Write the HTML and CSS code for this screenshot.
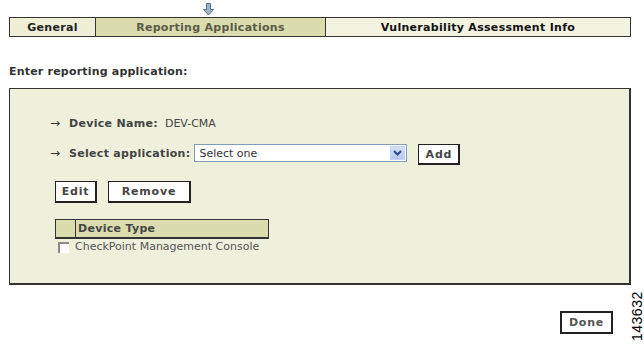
FILE: index.html
```html
<!DOCTYPE html>
<html lang="en">

<head>
  <meta charset="UTF-8">
  <title>Reporting Applications</title>
  <link rel="stylesheet" href="styles.css">
</head>

<body>
  <div class="page">
    <div class="marker">
      <svg width="11" height="13" viewBox="0 0 11 13">
        <path d="M3.5 0.5 H7.5 V6.5 H10.5 L5.5 12 L0.5 6.5 H3.5 Z" fill="#9fb3c8" stroke="#5d7089" stroke-width="1"/>
      </svg>
    </div>
    <div class="tabs">
      <div class="tab tab-general">General</div>
      <div class="tab tab-active">Reporting Applications</div>
      <div class="tab tab-vuln">Vulnerability Assessment Info</div>
    </div>

    <h2 class="prompt">Enter reporting application:</h2>

    <div class="panel">
      <div class="field-row">
        <span class="arrow">&rarr;</span>
        <span class="label">Device Name:</span>
        <span class="value">DEV-CMA</span>
      </div>
      <div class="field-row select-row">
        <span class="arrow">&rarr;</span>
        <span class="label">Select application:</span>
        <div class="select-box">
          <span>Select one</span>
          <span class="select-btn">
            <svg width="9" height="6" viewBox="0 0 9 6"><path d="M1 1 L4.5 4.5 L8 1" fill="none" stroke="#2c4a8a" stroke-width="2"/></svg>
          </span>
        </div>
        <button type="button" class="btn btn-add">Add</button>
      </div>
      <div class="actions">
        <button type="button" class="btn btn-edit">Edit</button>
        <button type="button" class="btn btn-remove">Remove</button>
      </div>
      <div class="device-table">
        <div class="table-head">
          <div class="head-check"></div>
          <div class="head-title">Device Type</div>
        </div>
        <div class="table-row">
          <span class="checkbox"></span>
          <span>CheckPoint Management Console</span>
        </div>
      </div>
    </div>

    <div class="footer">
      <button type="button" class="btn btn-done">Done</button>
    </div>
  </div>
  <div class="figure-id">143632</div>
</body>

</html>
```

FILE: styles.css
```css
body {
  margin: 0;
  padding: 0;
  font-family: "DejaVu Sans", Verdana, sans-serif;
  font-size: 11px;
  color: #444;
  background: white;
  position: relative;
  width: 644px;
  height: 347px;
  overflow: hidden;
}

.page {
  margin-left: 9px;
  width: 622px;
}

.marker {
  height: 17px;
  padding-left: 194px;
  padding-top: 3px;
  box-sizing: border-box;
}

.marker svg {
  display: block;
}

.tabs {
  display: flex;
  height: 20px;
  border: 1px solid #333;
  box-sizing: border-box;
}

.tab {
  display: flex;
  align-items: center;
  justify-content: center;
  font-weight: bold;
  font-size: 11px;
  letter-spacing: 0.3px;
}

.tab-general {
  width: 85px;
  background: #eeefd6;
  color: #222;
  border-right: 1px solid #333;
}

.tab-active {
  width: 229px;
  background: #dadcae;
  color: #5a5a48;
  border-right: 1px solid #333;
}

.tab-vuln {
  flex: 1;
  background: #f3f3e2;
  color: #111;
}

.prompt {
  margin: 28px 0 0 0;
  font-size: 11px;
  font-weight: bold;
  color: #333;
  line-height: 14px;
  letter-spacing: 0.2px;
}

.panel {
  margin-top: 9px;
  height: 197px;
  border: 1px solid #333;
  border-width: 1px 2px 2px 1px;
  background: #eff0dc;
  box-sizing: border-box;
  padding: 26px 0 0 40px;
}

.field-row {
  display: flex;
  align-items: center;
  height: 16px;
}

.arrow {
  width: 19px;
  font-size: 12px;
  color: #333;
}

.label {
  font-weight: bold;
  color: #444;
  letter-spacing: 0.3px;
}

.value {
  margin-left: 7px;
  color: #444;
}

.select-row {
  margin-top: 11px;
  height: 22px;
}

.select-box {
  margin-left: 4px;
  width: 213px;
  height: 18px;
  border: 1px solid #7f9db9;
  background: white;
  box-sizing: border-box;
  display: flex;
  align-items: center;
  justify-content: space-between;
  padding-left: 4px;
  color: #333;
  font-size: 11px;
}

.select-btn {
  width: 15px;
  height: 14px;
  margin-right: 1px;
  background: linear-gradient(#d6e1f7, #b4c8f0);
  border: 1px solid #c3d3fd;
  box-sizing: border-box;
  display: flex;
  align-items: center;
  justify-content: center;
}

.btn {
  font-family: "DejaVu Sans", Verdana, sans-serif;
  font-size: 11px;
  font-weight: bold;
  color: #444;
  background: white;
  border: 1px solid #222;
  border-width: 1px 2px 2px 1px;
  height: 21px;
  padding: 0;
  letter-spacing: 0.8px;
  cursor: pointer;
}

.btn-add {
  margin-left: 11px;
  margin-top: 3px;
  width: 42px;
}

.actions {
  display: flex;
  gap: 11px;
  margin-top: 17px;
  margin-left: 5px;
}

.btn-edit {
  width: 42px;
  height: 22px;
}

.btn-remove {
  width: 83px;
  height: 22px;
}

.device-table {
  margin-top: 16px;
  margin-left: 5px;
  width: 214px;
}

.table-head {
  display: flex;
  height: 20px;
  border: 1px solid #333;
  border-width: 1px 1px 2px 1px;
  box-sizing: border-box;
  background: #dadcae;
}

.head-check {
  width: 19px;
  border-right: 1px solid #333;
}

.head-title {
  padding-left: 2px;
  font-weight: bold;
  color: #444;
  letter-spacing: 0.3px;
  display: flex;
  align-items: center;
}

.table-row {
  display: flex;
  align-items: center;
  margin-top: 1px;
  color: #555;
}

.checkbox {
  width: 11px;
  height: 11px;
  margin: 2px 6px 0 3px;
  background: white;
  border-top: 2px solid #8a8a8a;
  border-left: 2px solid #8a8a8a;
  box-sizing: border-box;
}

.footer {
  display: flex;
  justify-content: flex-end;
  margin-top: 26px;
  padding-right: 18px;
}

.btn-done {
  width: 53px;
  height: 23px;
  border-width: 2px 2px 2px 2px;
  color: #555;
}

.figure-id {
  position: absolute;
  left: 630px;
  top: 341px;
  transform: rotate(-90deg);
  transform-origin: left top;
  font-family: "Liberation Sans", Arial, sans-serif;
  font-size: 14px;
  color: #000;
  width: 52px;
  line-height: 14px;
  letter-spacing: 0.5px;
}
```
